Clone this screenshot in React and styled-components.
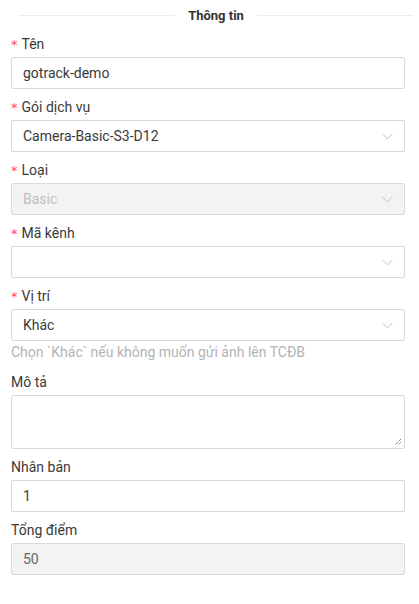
import React from 'react';
import styled, { createGlobalStyle } from 'styled-components';

const Global = createGlobalStyle`
  body {
    margin: 0;
    background: #fff;
    font-family: Roboto, "Noto Sans", Arial, sans-serif;
    font-size: 14px;
    color: #3a3a3a;
  }
  * { box-sizing: border-box; }
`;

const Form = styled.div`
  width: 419px;
  padding: 4px 14px 0 11px;
`;

const Divider = styled.div`
  display: flex;
  align-items: center;
  margin: 0 -8px 0 8px;
  height: 22px;
  font-size: 13px;
  font-weight: 700;
  color: #333;
  &::before, &::after {
    content: '';
    flex: 1;
    border-top: 1px solid #ececec;
  }
  span { padding: 0 13px; }
`;

const Item = styled.div`
  margin-top: 7px;
`;

const Label = styled.div`
  height: 22px;
  line-height: 22px;
  margin-bottom: 2px;
  color: #3a3a3a;
  display: flex;
  align-items: center;
`;

const Star = styled.span`
  color: #ff4d4f;
  font-size: 13px;
  margin-right: 4px;
  font-family: SimSun, "DejaVu Sans", sans-serif;
  line-height: 1;
`;

const Box = styled.div`
  height: 32px;
  border: 1px solid #d9d9d9;
  border-radius: 2px;
  background: ${p => (p.disabled ? '#f3f3f3' : '#fff')};
  color: ${p => p.tone || '#3a3a3a'};
  display: flex;
  align-items: center;
  padding: 0 11px;
  justify-content: space-between;
`;

const Area = styled.div`
  height: 54px;
  border: 1px solid #d9d9d9;
  border-radius: 2px;
  position: relative;
`;

const Grip = styled.svg`
  position: absolute;
  right: 2px;
  bottom: 2px;
`;

const Help = styled.div`
  color: #b3b3b3;
  line-height: 22px;
  height: 23px;
`;

const Chevron = () => (
  <svg width="11" height="7" viewBox="0 0 11 7">
    <path d="M0.5 0.8 L5.5 5.8 L10.5 0.8" fill="none" stroke="#bfbfbf" strokeWidth="1" />
  </svg>
);

function Field({ label, required, value, select, disabled, tone }) {
  return (
    <Item>
      <Label>{required && <Star>*</Star>}{label}</Label>
      <Box disabled={disabled} tone={tone}>
        <span>{value}</span>
        {select && <Chevron />}
      </Box>
    </Item>
  );
}

export default function App() {
  return (
    <>
      <Global />
      <Form>
        <Divider><span>Thông tin</span></Divider>
        <Field required label="Tên" value="gotrack-demo" />
        <Field required label="Gói dịch vụ" value="Camera-Basic-S3-D12" select />
        <Field required label="Loại" value="Basic" select disabled tone="#bfbfbf" />
        <Field required label="Mã kênh" value="" select />
        <Field required label="Vị trí" value="Khác" select />
        <Help>Chọn `Khác` nếu không muốn gửi ảnh lên TCĐB</Help>
        <Item>
          <Label>Mô tả</Label>
          <Area>
            <Grip width="8" height="8" viewBox="0 0 8 8">
              <path d="M7 1 L1 7 M7 4 L4 7" stroke="#555" strokeWidth="1" strokeDasharray="1 1" />
            </Grip>
          </Area>
        </Item>
        <Field label="Nhân bản" value="1" />
        <Field label="Tổng điểm" value="50" disabled tone="#666" />
      </Form>
    </>
  );
}
